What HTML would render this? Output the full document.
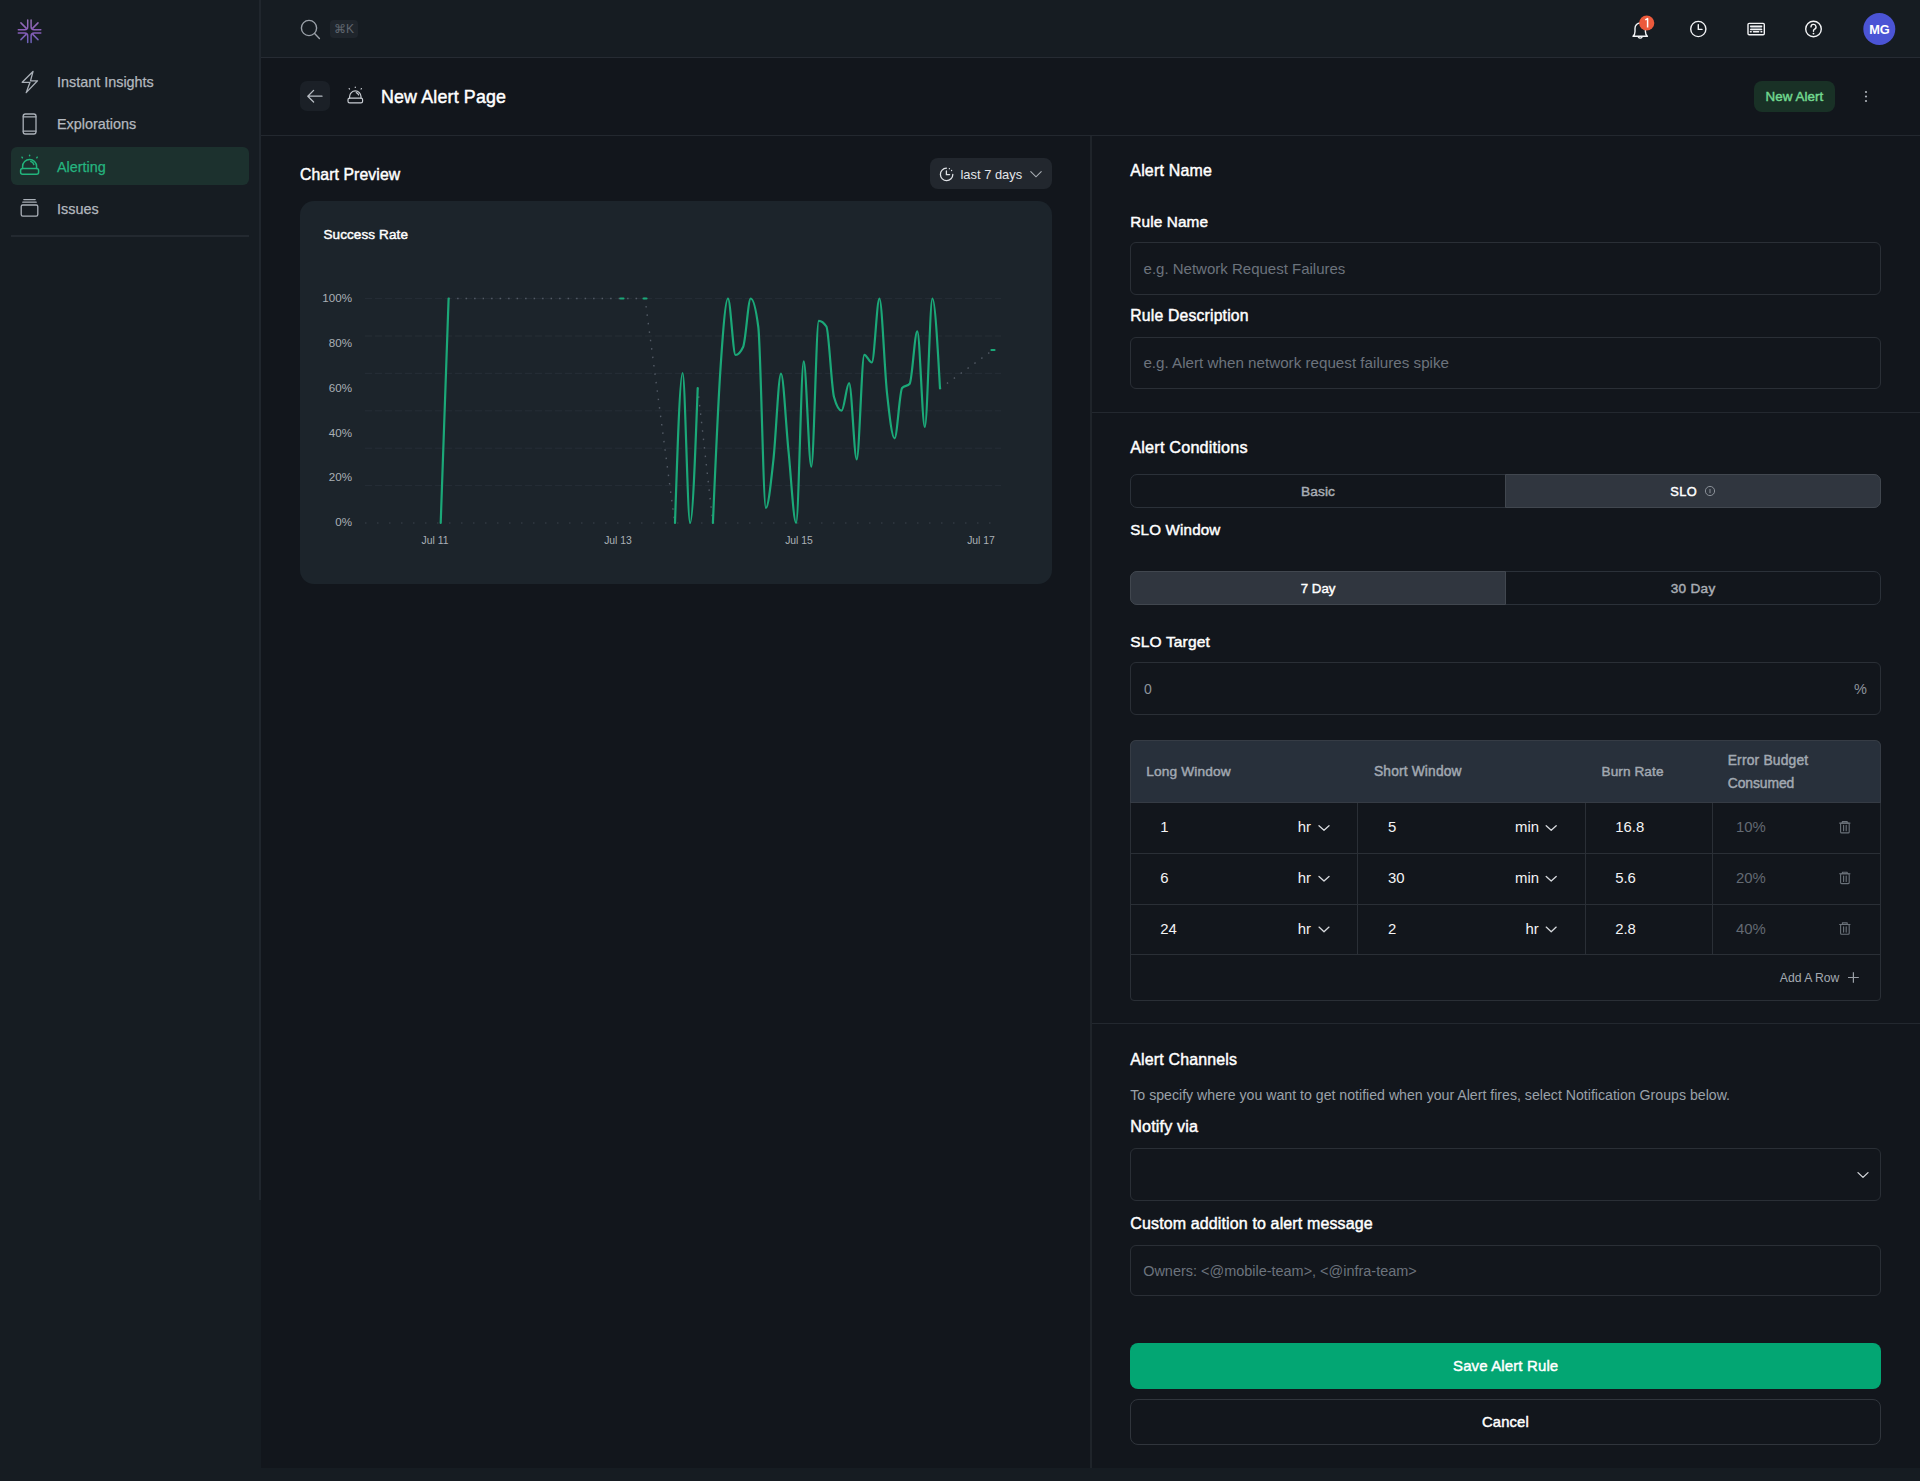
<!DOCTYPE html>
<html><head><meta charset="utf-8"><title>New Alert Page</title>
<style>
*{box-sizing:border-box}
html,body{margin:0;padding:0}
body{width:1920px;height:1481px;background:#161c22;position:relative;overflow:hidden;font-family:"Liberation Sans",sans-serif}
.a{position:absolute}
.t{position:absolute;line-height:1;white-space:nowrap}
svg{position:absolute;overflow:visible}
</style></head><body>
<div class="a" style="left:261px;top:58px;width:1659px;height:1410px;background:#12161c"></div>
<div class="a" style="left:259px;top:0;width:2px;height:1200px;background:#20262d"></div>
<div class="a" style="left:261px;top:57px;width:1659px;height:1px;background:#262b33"></div>
<div class="a" style="left:261px;top:135px;width:1659px;height:1px;background:#23282f"></div>
<div class="a" style="left:1090px;top:136px;width:2px;height:1332px;background:#1f242a"></div>
<div class="a" style="left:1092px;top:412px;width:828px;height:1px;background:#23282f"></div>
<div class="a" style="left:1092px;top:1023px;width:828px;height:1px;background:#23282f"></div>
<svg width="1920" height="1481" style="left:0;top:0">
<defs><linearGradient id="lg" x1="0" y1="19" x2="0" y2="43" gradientUnits="userSpaceOnUse"><stop offset="0" stop-color="#9470b4"/><stop offset="0.5" stop-color="#8a5cb8"/><stop offset="1" stop-color="#6a62b8"/></linearGradient></defs>
<g fill="none" stroke="url(#lg)" stroke-width="1.5" stroke-linecap="round">
<path d="M27.7,20.1V26.7a3,3 0 0 1 -3,3H18.3"/>
<path d="M31.1,20.1V26.7a3,3 0 0 0 3,3H40.8"/>
<path d="M27.7,42.4V35.9a3,3 0 0 0 -3,-3H18.3"/>
<path d="M31.1,42.4V35.9a3,3 0 0 1 3,-3H40.8"/>
<path d="M20.9,22.9L26.1,28.1M38,22.9L32.8,28.1M20.9,39.6L26.1,34.4M38,39.6L32.8,34.4"/>
</g>
<g fill="none" stroke="#aab0b8" stroke-width="1.3" stroke-linejoin="round" stroke-linecap="round">
<path d="M33,71.5L22.2,82.3H30L26.2,92.6L37.5,80.8H30.5Z"/>
<rect x="23.2" y="114" width="12.8" height="20" rx="2.2"/>
<path d="M23.2,116.8H36M23.2,131.2H36"/>
<rect x="21.2" y="205" width="16.6" height="11.2" rx="1.6"/>
<path d="M22.8,202.2H36.2M23.8,199.6H35.2"/>
</g>
</svg>
<div class="a" style="left:11px;top:147px;width:238px;height:38px;border-radius:6px;background:#1c312e"></div>
<div class="a" style="left:11px;top:235px;width:238px;height:2px;background:#232930"></div>
<div class="t" style="left:57px;top:74.81px;font-size:14.4px;color:#b3b8bf;-webkit-text-stroke:0.25px #b3b8bf;">Instant Insights</div>
<div class="t" style="left:57px;top:117.01px;font-size:14.4px;color:#b3b8bf;-webkit-text-stroke:0.25px #b3b8bf;">Explorations</div>
<div class="t" style="left:57px;top:159.61px;font-size:14.4px;color:#25b47f;-webkit-text-stroke:0.25px #25b47f;">Alerting</div>
<div class="t" style="left:57px;top:201.81px;font-size:14.4px;color:#b3b8bf;-webkit-text-stroke:0.25px #b3b8bf;">Issues</div>
<svg width="1920" height="1481" style="left:0;top:0">
<g fill="none" stroke="#22b47c" stroke-width="1.5" stroke-linecap="round" stroke-linejoin="round">
<rect x="20.6" y="168.6" width="18" height="5.6" rx="2"/>
<path d="M22.6,168.6V166.5a7,7 0 0 1 14,0V168.6"/>
<path d="M30.8,161.5a4,4 0 0 1 3,3"/>
<path d="M29.6,155.2V155.8M22,157.2L22.4,157.8M37.2,157.2L36.8,157.8"/>
</g></svg>
<svg width="1920" height="60" style="left:0;top:0">
<g fill="none" stroke="#9aa0a8" stroke-width="1.4" stroke-linecap="round">
<circle cx="309" cy="28" r="7.6"/><path d="M314.6,33.6L319.4,38.4"/>
</g>
<g fill="none" stroke="#f2f3f5" stroke-width="1.4" stroke-linecap="round" stroke-linejoin="round">
<path d="M1633,36.2c1.2,-1,2,-2.6,2,-4.8v-3.2a5.2,5.2 0 0 1 10.4,0v3.2c0,2.2 0.8,3.8 2,4.8Z"/>
<path d="M1638.4,37.2a2.2,2.2 0 0 0 3.6,0"/>
<circle cx="1698.3" cy="29" r="7.6"/><path d="M1698.3,24.6V29.4H1702"/>
<rect x="1748" y="23.4" width="16.3" height="11.3" rx="1.2"/>
<rect x="1750.4" y="26.3" width="11.5" height="3.2" fill="#7d838a" stroke="none"/>
<path d="M1750.6,26.3H1761.7M1750.6,29.6H1761.7M1750.4,31.7H1751.2M1753.5,31.7H1758.7M1761,31.7H1761.8"/>
<circle cx="1813.5" cy="29" r="7.8"/>
<path d="M1811,26.9a2.5,2.5 0 1 1 3.6,2.2c-0.8,0.4 -1.1,0.9 -1.1,1.6v0.5"/>
</g>
<circle cx="1813.5" cy="33.6" r="0.9" fill="#f2f3f5"/>
<circle cx="1646.7" cy="23" r="7.6" fill="#ec5a3c"/>
<circle cx="1879.3" cy="29" r="16" fill="#4b54d5"/>
</svg>
<div class="a" style="left:330px;top:20px;width:28px;height:18px;border-radius:4px;background:#1f252c"></div>
<div class="t" style="left:334px;top:22.84px;font-size:12px;color:#5f666f;">&#8984;K</div>
<svg width="20" height="20" style="left:1637px;top:13px"><path d="M8.3,6.9L10.6,5.6V14.6" fill="none" stroke="#fff" stroke-width="1.5" stroke-linejoin="round"/></svg>
<div class="t" style="left:1869.2px;top:23.66px;font-size:12.8px;color:#fff;font-weight:bold;">MG</div>
<div class="a" style="left:300px;top:81px;width:30px;height:30px;border-radius:7px;background:#1b2027"></div>
<svg width="600" height="140" style="left:0;top:0">
<g fill="none" stroke="#b7bcc3" stroke-width="1.3" stroke-linecap="round" stroke-linejoin="round">
<path d="M322,96.2H308M313.6,90.4L307.8,96.2L313.6,102"/>
</g>
<g fill="none" stroke="#c9cdd3" stroke-width="1.2" stroke-linecap="round" stroke-linejoin="round">
<rect x="348" y="98.2" width="14.6" height="4.6" rx="1.6"/>
<path d="M349.6,98.2V96.6a5.7,5.7 0 0 1 11.4,0V98.2"/>
<path d="M356.2,92.6a3.2,3.2 0 0 1 2.4,2.4"/>
<path d="M355.3,87V87.5M349.2,88.6L349.5,89M361.4,88.6L361.1,89"/>
</g></svg>
<div class="t" style="left:381px;top:88.90px;font-size:17.83px;color:#ffffff;-webkit-text-stroke:0.45px #ffffff;letter-spacing:0.162px;">New Alert Page</div>
<div class="a" style="left:1754px;top:81px;width:81px;height:31px;border-radius:8px;background:#193126"></div>
<div class="t" style="left:1765.4px;top:89.95px;font-size:13.4px;color:#72d890;-webkit-text-stroke:0.45px #72d890;letter-spacing:0.081px;">New Alert</div>
<svg width="20" height="20" style="left:1856px;top:86px"><g fill="#aeb3ba"><circle cx="10" cy="6" r="1.1"/><circle cx="10" cy="10.5" r="1.1"/><circle cx="10" cy="15" r="1.1"/></g></svg>
<div class="t" style="left:300px;top:167.26px;font-size:15.76px;color:#ffffff;-webkit-text-stroke:0.45px #ffffff;letter-spacing:0.104px;">Chart Preview</div>
<div class="a" style="left:930px;top:158px;width:122px;height:31px;border-radius:8px;background:#22272e"></div>
<svg width="1920" height="200" style="left:0;top:0">
<g fill="none" stroke="#dfe2e6" stroke-width="1.3" stroke-linecap="round">
<path d="M952.8,174.4a6.2,6.2 0 1 1 -6.4,-6.2"/>
<path d="M946.4,171V174.6H949.6"/>
<path d="M949.4,168.6V168.7M951.6,170.4V170.5"/>
<path d="M1030.8,171.6L1036,176.8L1041.2,171.6" stroke="#a9aeb4" stroke-width="1.1"/>
</g></svg>
<div class="t" style="left:960.5px;top:168.88px;font-size:12.9px;color:#e3e6ea;">last 7 days</div>
<div class="a" style="left:300px;top:201px;width:752px;height:383px;border-radius:14px;background:#1c242b"></div>
<div class="t" style="left:323.4px;top:227.98px;font-size:13.49px;color:#ffffff;-webkit-text-stroke:0.45px #ffffff;letter-spacing:0.123px;">Success Rate</div>
<div class="t" style="left:300px;top:292.18px;font-size:11.6px;color:#aab0b6;width:52px;text-align:right;">100%</div>
<div class="t" style="left:300px;top:337.02px;font-size:11.6px;color:#aab0b6;width:52px;text-align:right;">80%</div>
<div class="t" style="left:300px;top:381.86px;font-size:11.6px;color:#aab0b6;width:52px;text-align:right;">60%</div>
<div class="t" style="left:300px;top:426.70px;font-size:11.6px;color:#aab0b6;width:52px;text-align:right;">40%</div>
<div class="t" style="left:300px;top:470.54px;font-size:11.6px;color:#aab0b6;width:52px;text-align:right;">20%</div>
<div class="t" style="left:300px;top:516.38px;font-size:11.6px;color:#aab0b6;width:52px;text-align:right;">0%</div>
<div class="t" style="left:405px;top:536.39px;font-size:10.4px;color:#aab0b6;width:60px;text-align:center;">Jul 11</div>
<div class="t" style="left:588px;top:536.39px;font-size:10.4px;color:#aab0b6;width:60px;text-align:center;">Jul 13</div>
<div class="t" style="left:769px;top:536.39px;font-size:10.4px;color:#aab0b6;width:60px;text-align:center;">Jul 15</div>
<div class="t" style="left:951px;top:536.39px;font-size:10.4px;color:#aab0b6;width:60px;text-align:center;">Jul 17</div>
<svg width="1920" height="600" style="left:0;top:0">
<g stroke="#262e37" stroke-width="1" fill="none" stroke-dasharray="7 3"><path d="M365,298.6H1001"/><path d="M365,336.0H1001"/><path d="M365,373.4H1001"/><path d="M365,410.8H1001"/><path d="M365,448.2H1001"/><path d="M365,485.6H1001"/></g>
<path d="M365,523H1001" stroke="#3a424c" stroke-width="1.2" stroke-dasharray="1.5 10.5" fill="none"/>
<g stroke="#535b66" stroke-width="1.4" fill="none" stroke-dasharray="1.5 7">
<path d="M448.6,298.5H645L674.8,523"/>
<path d="M697.7,388L712.9,523"/>
<path d="M940,388.5L993,350"/>
</g>
<g stroke="#1ba878" stroke-width="2.2" fill="none" stroke-linejoin="round" stroke-linecap="round">
<path d="M440.7,523L448.6,298.5"/>
<path d="M675.0,523.0C677.5,448.0,680.0,373.0,682.6,373.0C685.1,373.0,687.6,523.0,690.1,523.0C692.7,523.0,695.2,455.5,697.7,388.0"/>
<path d="M712.9,523.0C715.4,465.2,717.9,407.4,720.4,370.0C722.9,332.6,725.5,298.5,728.0,298.5C730.5,298.5,733.0,355.0,735.6,355.0C738.1,355.0,740.6,352.3,743.1,347.0C745.7,341.7,748.2,298.5,750.7,298.5C753.2,298.5,755.8,308.0,758.3,327.0C760.8,346.0,763.3,508.0,765.9,508.0C768.4,508.0,770.9,482.4,773.4,460.0C775.9,437.6,778.5,373.5,781.0,373.5C783.5,373.5,786.0,427.1,788.6,452.0C791.1,476.9,793.6,523.0,796.1,523.0C798.7,523.0,801.2,361.3,803.7,361.3C806.2,361.3,808.8,466.7,811.3,466.7C813.8,466.7,816.3,320.8,818.8,320.8C821.4,320.8,823.9,322.7,826.4,326.5C828.9,330.3,831.5,387.9,834.0,397.0C836.5,406.1,839.0,410.7,841.6,410.7C844.1,410.7,846.6,383.2,849.1,383.2C851.7,383.2,854.2,459.4,856.7,459.4C859.2,459.4,861.8,354.8,864.3,354.8C866.8,354.8,869.3,362.5,871.8,362.5C874.4,362.5,876.9,298.5,879.4,298.5C881.9,298.5,884.5,369.7,887.0,393.0C889.5,416.3,892.0,438.3,894.6,438.3C897.1,438.3,899.6,390.9,902.1,388.0C904.7,385.1,907.2,386.6,909.7,383.7C912.2,380.8,914.7,331.3,917.3,331.3C919.8,331.3,922.3,427.0,924.8,427.0C927.4,427.0,929.9,298.5,932.4,298.5C934.9,298.5,937.5,343.5,940.0,388.5"/>
<path d="M620.5,298.5H623.5M643.5,298.5H646.5M991.5,350H994.5"/>
</g>
</svg>
<div class="t" style="left:1130.3px;top:163.29px;font-size:15.96px;color:#ffffff;-webkit-text-stroke:0.45px #ffffff;letter-spacing:0.189px;">Alert Name</div>
<div class="t" style="left:1130.3px;top:213.69px;font-size:15.37px;color:#ffffff;-webkit-text-stroke:0.45px #ffffff;letter-spacing:0.112px;">Rule Name</div>
<div class="a" style="left:1130px;top:242px;width:751px;height:52.5px;border-radius:6px;border:1px solid #2a2f36"></div>
<div class="t" style="left:1143.6px;top:261.10px;font-size:15px;color:#6c737c;">e.g. Network Request Failures</div>
<div class="t" style="left:1130.3px;top:308.46px;font-size:15.76px;color:#ffffff;-webkit-text-stroke:0.45px #ffffff;letter-spacing:0.180px;">Rule Description</div>
<div class="a" style="left:1130px;top:337px;width:751px;height:52px;border-radius:6px;border:1px solid #2a2f36"></div>
<div class="t" style="left:1143.4px;top:355.43px;font-size:15.2px;color:#6c737c;">e.g. Alert when network request failures spike</div>
<div class="t" style="left:1130.3px;top:439.24px;font-size:16.25px;color:#ffffff;-webkit-text-stroke:0.45px #ffffff;letter-spacing:0.173px;">Alert Conditions</div>
<div class="a" style="left:1130px;top:474px;width:751px;height:34px;border-radius:7px;border:1px solid #2b3139"></div>
<div class="a" style="left:1505px;top:474px;width:376px;height:34px;border-radius:0 7px 7px 0;border:1px solid #41474f;background:#30363f"></div>
<div class="t" style="left:1301px;top:485.41px;font-size:13.69px;color:#a9aeb5;-webkit-text-stroke:0.45px #a9aeb5;letter-spacing:0.100px;">Basic</div>
<div class="t" style="left:1670.3px;top:485.86px;font-size:12.8px;color:#ffffff;-webkit-text-stroke:0.45px #ffffff;letter-spacing:0.350px;">SLO</div>
<svg width="20" height="20" style="left:1700px;top:480.6px"><circle cx="10" cy="10" r="4.6" fill="none" stroke="#8a9098" stroke-width="1"/><path d="M10,8V12.2" stroke="#8a9098" stroke-width="1"/></svg>
<div class="t" style="left:1130.3px;top:521.96px;font-size:15.17px;color:#ffffff;-webkit-text-stroke:0.45px #ffffff;letter-spacing:0.172px;">SLO Window</div>
<div class="a" style="left:1130px;top:571px;width:751px;height:34px;border-radius:7px;border:1px solid #2b3139"></div>
<div class="a" style="left:1130px;top:571px;width:376px;height:34px;border-radius:7px 0 0 7px;border:1px solid #41474f;background:#30363f"></div>
<div class="t" style="left:1300.8px;top:581.74px;font-size:13.3px;color:#ffffff;-webkit-text-stroke:0.45px #ffffff;letter-spacing:-0.012px;">7 Day</div>
<div class="t" style="left:1670.8px;top:582.49px;font-size:13.59px;color:#a9aeb5;-webkit-text-stroke:0.45px #a9aeb5;letter-spacing:0.270px;">30 Day</div>
<div class="t" style="left:1130.3px;top:633.83px;font-size:15.56px;color:#ffffff;-webkit-text-stroke:0.45px #ffffff;letter-spacing:0.122px;">SLO Target</div>
<div class="a" style="left:1130px;top:662px;width:751px;height:52.5px;border-radius:6px;border:1px solid #2a2f36"></div>
<div class="t" style="left:1144px;top:681.65px;font-size:14px;color:#8d939b;">0</div>
<div class="t" style="left:1854px;top:682.22px;font-size:14.5px;color:#8d939b;">%</div>
<div class="a" style="left:1130px;top:740px;width:751px;height:260.5px;border-radius:6px 6px 4px 4px;border:1px solid #2a2f36"></div>
<div class="a" style="left:1130px;top:740px;width:751px;height:63px;border-radius:6px 6px 0 0;background:#28303b;border:1px solid #363c45;border-bottom-color:#353b44"></div>
<div class="a" style="left:1131px;top:853.4px;width:749px;height:1px;background:#2a2f36"></div>
<div class="a" style="left:1131px;top:903.6px;width:749px;height:1px;background:#2a2f36"></div>
<div class="a" style="left:1131px;top:954.0px;width:749px;height:1px;background:#2a2f36"></div>
<div class="a" style="left:1357px;top:803px;width:1px;height:151px;background:#2a2f36"></div>
<div class="a" style="left:1585px;top:803px;width:1px;height:151px;background:#2a2f36"></div>
<div class="a" style="left:1712px;top:803px;width:1px;height:151px;background:#2a2f36"></div>
<div class="t" style="left:1146.3px;top:765.41px;font-size:13.69px;color:#a2a9b2;-webkit-text-stroke:0.45px #a2a9b2;letter-spacing:0.140px;">Long Window</div>
<div class="t" style="left:1374px;top:765.32px;font-size:13.79px;color:#a2a9b2;-webkit-text-stroke:0.45px #a2a9b2;letter-spacing:0.155px;">Short Window</div>
<div class="t" style="left:1601.5px;top:764.69px;font-size:13.59px;color:#a2a9b2;-webkit-text-stroke:0.45px #a2a9b2;letter-spacing:0.100px;">Burn Rate</div>
<div class="t" style="left:1727.7px;top:754.24px;font-size:13.89px;color:#a2a9b2;-webkit-text-stroke:0.45px #a2a9b2;letter-spacing:0.168px;">Error Budget</div>
<div class="t" style="left:1727.7px;top:776.94px;font-size:13.89px;color:#a2a9b2;-webkit-text-stroke:0.45px #a2a9b2;letter-spacing:-0.064px;">Consumed</div>
<div class="t" style="left:1160.3px;top:819.58px;font-size:14.9px;color:#f2f3f5;">1</div>
<div class="t" style="left:1297.8px;top:819.58px;font-size:14.9px;color:#f2f3f5;">hr</div>
<div class="t" style="left:1387.9px;top:819.58px;font-size:14.9px;color:#f2f3f5;">5</div>
<div class="t" style="left:1515px;top:819.58px;font-size:14.9px;color:#f2f3f5;">min</div>
<div class="t" style="left:1615.2px;top:819.58px;font-size:14.9px;color:#f2f3f5;">16.8</div>
<div class="t" style="left:1736px;top:819.58px;font-size:14.9px;color:#636a73;">10%</div>
<div class="t" style="left:1160.3px;top:871.28px;font-size:14.9px;color:#f2f3f5;">6</div>
<div class="t" style="left:1297.8px;top:871.28px;font-size:14.9px;color:#f2f3f5;">hr</div>
<div class="t" style="left:1387.9px;top:871.28px;font-size:14.9px;color:#f2f3f5;">30</div>
<div class="t" style="left:1515px;top:871.28px;font-size:14.9px;color:#f2f3f5;">min</div>
<div class="t" style="left:1615.2px;top:871.28px;font-size:14.9px;color:#f2f3f5;">5.6</div>
<div class="t" style="left:1736px;top:871.28px;font-size:14.9px;color:#636a73;">20%</div>
<div class="t" style="left:1160.3px;top:921.98px;font-size:14.9px;color:#f2f3f5;">24</div>
<div class="t" style="left:1297.8px;top:921.98px;font-size:14.9px;color:#f2f3f5;">hr</div>
<div class="t" style="left:1387.9px;top:921.98px;font-size:14.9px;color:#f2f3f5;">2</div>
<div class="t" style="left:1525.4px;top:921.98px;font-size:14.9px;color:#f2f3f5;">hr</div>
<div class="t" style="left:1615.2px;top:921.98px;font-size:14.9px;color:#f2f3f5;">2.8</div>
<div class="t" style="left:1736px;top:921.98px;font-size:14.9px;color:#636a73;">40%</div>
<svg width="1920" height="1100" style="left:0;top:0"><g fill="none" stroke="#d6d9dd" stroke-width="1.3" stroke-linecap="round" stroke-linejoin="round"><path d="M1319,825.7L1324,830.3L1329,825.7M1546.2,825.7L1551.2,830.3L1556.2,825.7"/><g stroke="#6b727a" stroke-width="1.1"><path d="M1839.6,823.1H1850M1842.4,823.1V821.5H1847.2V823.1"/><rect x="1840.6" y="823.1" width="8.6" height="9.8" rx="1"/><path d="M1843.6,825.3V830.7M1846.2,825.3V830.7"/></g><path d="M1319,876.4L1324,881.0L1329,876.4M1546.2,876.4L1551.2,881.0L1556.2,876.4"/><g stroke="#6b727a" stroke-width="1.1"><path d="M1839.6,873.8H1850M1842.4,873.8V872.2H1847.2V873.8"/><rect x="1840.6" y="873.8" width="8.6" height="9.8" rx="1"/><path d="M1843.6,876.0V881.4M1846.2,876.0V881.4"/></g><path d="M1319,927.1L1324,931.7L1329,927.1M1546.2,927.1L1551.2,931.7L1556.2,927.1"/><g stroke="#6b727a" stroke-width="1.1"><path d="M1839.6,924.5H1850M1842.4,924.5V922.9H1847.2V924.5"/><rect x="1840.6" y="924.5" width="8.6" height="9.8" rx="1"/><path d="M1843.6,926.7V932.1M1846.2,926.7V932.1"/></g></g><path d="M1853.4,972.2V982.8M1848,977.5H1858.8" stroke="#9aa0a7" stroke-width="1.2" fill="none"/></svg>
<div class="t" style="left:1779.8px;top:971.67px;font-size:12.2px;color:#a4aab1;">Add A Row</div>
<div class="t" style="left:1130.3px;top:1052.19px;font-size:15.96px;color:#ffffff;-webkit-text-stroke:0.45px #ffffff;letter-spacing:0.154px;">Alert Channels</div>
<div class="t" style="left:1130.3px;top:1088.02px;font-size:14.15px;color:#9aa1a9;">To specify where you want to get notified when your Alert fires, select Notification Groups below.</div>
<div class="t" style="left:1130.3px;top:1118.33px;font-size:16.15px;color:#ffffff;-webkit-text-stroke:0.45px #ffffff;letter-spacing:0.150px;">Notify via</div>
<div class="a" style="left:1130px;top:1148px;width:751px;height:53px;border-radius:6px;border:1px solid #2a2f36"></div>
<svg width="20" height="20" style="left:1853px;top:1165px"><path d="M5,7.6L10,12.4L15,7.6" fill="none" stroke="#d6d9dd" stroke-width="1.3" stroke-linecap="round" stroke-linejoin="round"/></svg>
<div class="t" style="left:1130.3px;top:1216.24px;font-size:16.01px;color:#ffffff;-webkit-text-stroke:0.45px #ffffff;letter-spacing:0.129px;">Custom addition to alert message</div>
<div class="a" style="left:1130px;top:1244.5px;width:751px;height:51.5px;border-radius:6px;border:1px solid #2a2f36"></div>
<div class="t" style="left:1143.2px;top:1263.76px;font-size:14.46px;color:#6c737c;">Owners: &lt;@mobile-team&gt;, &lt;@infra-team&gt;</div>
<div class="a" style="left:1130px;top:1343px;width:751px;height:45.5px;border-radius:8px;background:#03a673"></div>
<div class="t" style="left:1453px;top:1359.32px;font-size:14.97px;color:#ffffff;-webkit-text-stroke:0.45px #ffffff;letter-spacing:0.143px;">Save Alert Rule</div>
<div class="a" style="left:1130px;top:1399px;width:751px;height:45.5px;border-radius:8px;border:1.5px solid #30353c"></div>
<div class="t" style="left:1482px;top:1415.49px;font-size:14.78px;color:#ffffff;-webkit-text-stroke:0.45px #ffffff;letter-spacing:0.160px;">Cancel</div>
</body></html>
